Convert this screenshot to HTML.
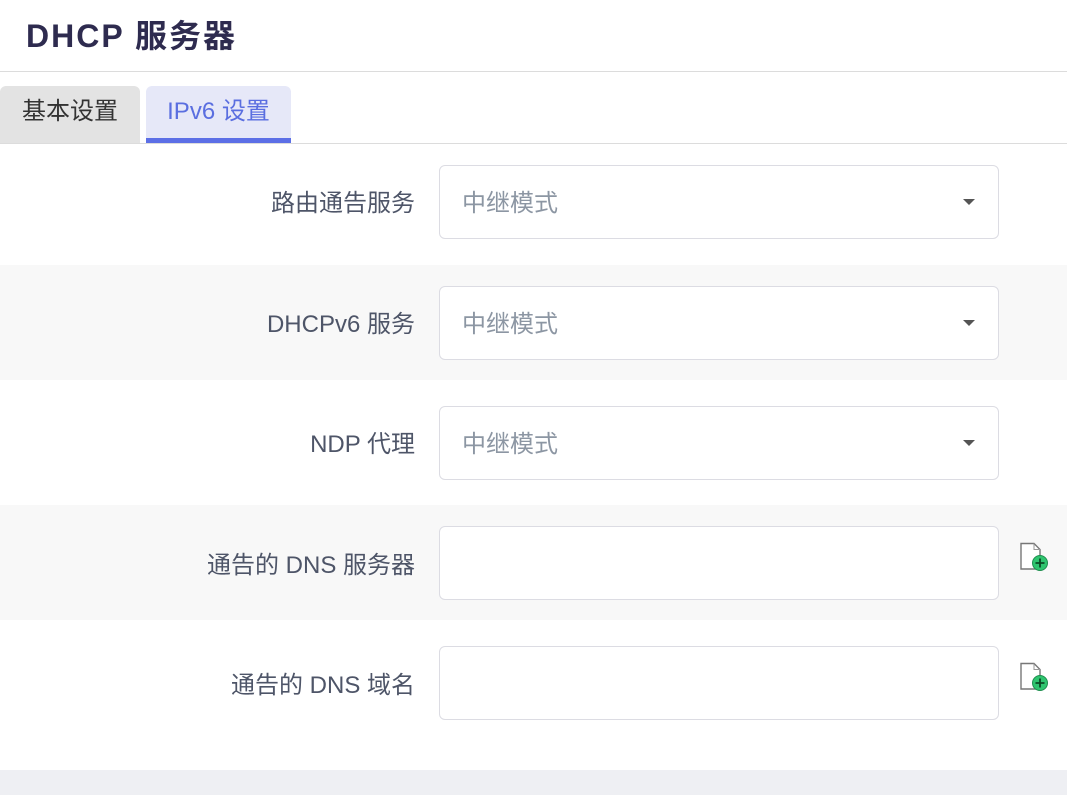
<!DOCTYPE html>
<html><head><meta charset="utf-8"><style>
body{margin:0;width:1067px;height:795px;overflow:hidden;background:#fff;font-family:"Liberation Sans","Noto Sans CJK SC",sans-serif;position:relative}
.t{position:absolute;left:26px;top:11px;font-size:32px;font-weight:bold;color:#2e2b4f;letter-spacing:2px}
.hr{position:absolute;left:0;right:0;height:1px;background:#dcdcdc}
.tab{position:absolute;top:86px;height:57px;border-radius:6px 6px 0 0;font-size:24px;line-height:52px;text-align:center}
.row{position:absolute;left:0;right:0}
.lab{position:absolute;right:652px;font-size:24px;color:#4e5568;text-align:right;white-space:nowrap}
.box{position:absolute;left:439px;width:558px;height:72px;border:1px solid #dcdce3;border-radius:6px;background:#fff}
.ph{position:absolute;left:22px;top:17px;font-size:24px;color:#8c96a3}
.car{position:absolute;left:523px;top:33px;width:0;height:0;border-left:6px solid transparent;border-right:6px solid transparent;border-top:6px solid #555}
.ic{position:absolute;left:1019px}
</style></head><body>
<div class="t">DHCP 服务器</div>
<div class="hr" style="top:71px"></div>
<div class="tab" style="left:0;width:140px;background:#e3e3e3;color:#333">基本设置</div>
<div class="tab" style="left:146px;width:145px;background:#e6e8f8;color:#5a6ee0">IPv6 设置<div style="position:absolute;left:0;right:0;bottom:0;height:5px;background:#5c6fe6"></div></div>
<div class="hr" style="top:143px"></div>

<div class="row" style="top:144px;height:121px;background:#fff"></div>
<div class="row" style="top:265px;height:115px;background:#f8f8f8"></div>
<div class="row" style="top:380px;height:125px;background:#fff"></div>
<div class="row" style="top:505px;height:115px;background:#f8f8f8"></div>
<div class="row" style="top:620px;height:150px;background:#fff"></div>
<div class="row" style="top:770px;height:25px;background:#eeeff3"></div>

<div class="lab" style="top:183px">路由通告服务</div>
<div class="box" style="top:165px"><span class="ph">中继模式</span><span class="car"></span></div>
<div class="lab" style="top:304px">DHCPv6 服务</div>
<div class="box" style="top:286px"><span class="ph">中继模式</span><span class="car"></span></div>
<div class="lab" style="top:424px">NDP 代理</div>
<div class="box" style="top:406px"><span class="ph">中继模式</span><span class="car"></span></div>
<div class="lab" style="top:545px">通告的 DNS 服务器</div>
<div class="box" style="top:526px"></div>
<div class="lab" style="top:665px">通告的 DNS 域名</div>
<div class="box" style="top:646px"></div>

<svg class="ic" style="top:542px" width="32" height="32" viewBox="0 0 32 32"><path d="M2 1.5H15L21 7.5V27H2Z" fill="#fff" stroke="#777" stroke-width="1.4"/><path d="M15 1.5V7.5H21" fill="none" stroke="#999"/><circle cx="21" cy="21" r="7.5" fill="#2fc46f" stroke="#1e8f4e"/><path d="M21 16.5V25.5M16.5 21H25.5" stroke="#0c4a25" stroke-width="1.8"/></svg>
<svg class="ic" style="top:662px" width="32" height="32" viewBox="0 0 32 32"><path d="M2 1.5H15L21 7.5V27H2Z" fill="#fff" stroke="#777" stroke-width="1.4"/><path d="M15 1.5V7.5H21" fill="none" stroke="#999"/><circle cx="21" cy="21" r="7.5" fill="#2fc46f" stroke="#1e8f4e"/><path d="M21 16.5V25.5M16.5 21H25.5" stroke="#0c4a25" stroke-width="1.8"/></svg>
</body></html>
